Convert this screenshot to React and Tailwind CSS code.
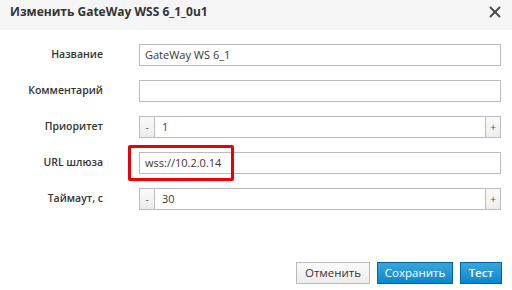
import { X } from 'lucide-react'

function Field({ label, children }) {
  return (
    <div className="flex items-center h-[22px]">
      <div className="w-[103px] text-right text-[10.5px] font-semibold text-[#333]">{label}</div>
      <div className="ml-[36px] flex-1 flex h-[22px]">{children}</div>
    </div>
  )
}

function TextInput({ value }) {
  return (
    <div className="flex-1 border border-[#bbb] bg-white px-[5px] flex items-center text-[11px] text-[#363636]">
      {value}
    </div>
  )
}

function StepBtn({ children }) {
  return (
    <div className="w-[16px] border border-[#bbb] bg-gradient-to-b from-[#fafafa] to-[#ededed] flex items-center justify-center text-[10px] text-[#555]">
      {children}
    </div>
  )
}

function Spinner({ value }) {
  return (
    <div className="flex-1 flex">
      <StepBtn>-</StepBtn>
      <div className="flex-1 border-y border-[#bbb] bg-white px-[7px] flex items-center text-[11px] text-[#363636]">
        {value}
      </div>
      <StepBtn>+</StepBtn>
    </div>
  )
}

export default function App() {
  return (
    <div className="w-[512px] h-[290px] bg-white relative overflow-hidden" style={{ fontFamily: '"Open Sans", "Noto Sans", sans-serif' }}>
      <header className="h-[30px] bg-[#f5f5f5] flex items-center justify-between pl-[10px] pr-[8px] pb-[6px]">
        <h1 className="text-[12px] font-bold text-[#333]">Изменить GateWay WSS 6_1_0u1</h1>
        <X size={18} strokeWidth={2.6} className="text-[#4d4d4d]" />
      </header>

      <div className="pt-[14px] pr-[11px] flex flex-col gap-[14px]">
        <Field label="Название"><TextInput value="GateWay WS 6_1" /></Field>
        <Field label="Комментарий"><TextInput value="" /></Field>
        <Field label="Приоритет"><Spinner value="1" /></Field>
        <Field label="URL шлюза"><TextInput value="wss://10.2.0.14" /></Field>
        <Field label="Таймаут, с"><Spinner value="30" /></Field>
      </div>

      <div className="absolute left-[128px] top-[145px] w-[106px] h-[36px] border-[3px] border-[#e8000b] rounded-[2px]" />

      <div className="mt-[52px] pr-[10px] flex justify-end gap-[7px] text-[11.5px]">
        <button className="h-[22px] w-[74px] border border-[#bbb] bg-gradient-to-b from-[#fafafa] to-[#ededed] text-[#363636]">Отменить</button>
        <button className="h-[22px] w-[76px] border border-[#00659c] bg-gradient-to-b from-[#39a5dc] to-[#0088ce] text-white">Сохранить</button>
        <button className="h-[22px] w-[42px] border border-[#00659c] bg-gradient-to-b from-[#39a5dc] to-[#0088ce] text-white font-semibold">Тест</button>
      </div>
    </div>
  )
}
